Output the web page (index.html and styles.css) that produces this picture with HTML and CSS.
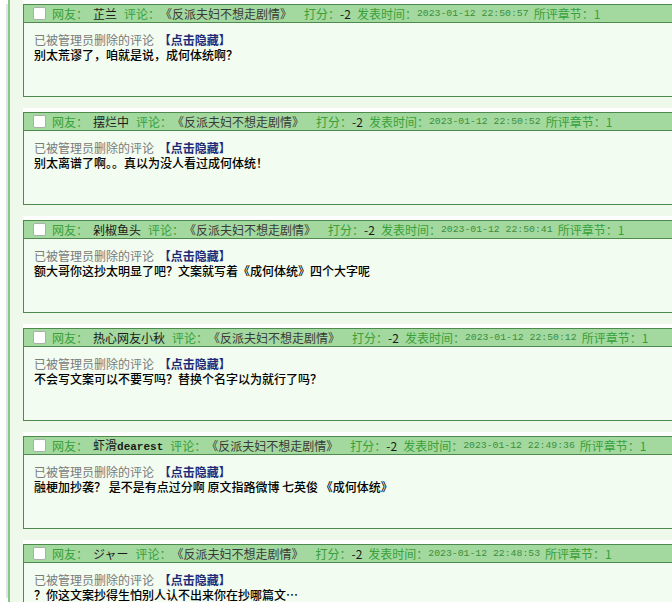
FILE: index.html
```html
<!DOCTYPE html>
<html lang="zh-CN">
<head>
<meta charset="utf-8">
<title>评论</title>
<link rel="stylesheet" href="styles.css">
</head>
<body>
<div class="frame">
  <div class="list">
    <div class="card">
      <div class="head"><span class="cb"></span><span class="g">网友：</span><span class="name">芷兰</span><span class="g">评论：</span><span class="book">《反派夫妇不想走剧情》</span><span class="g gap">打分：</span><span class="score">-2</span><span class="g">发表时间：</span><span class="date">2023-01-12 22:50:57</span><span class="g">所评章节：1</span></div>
      <div class="body"><div><span class="del">已被管理员删除的评论</span> <span class="hide">【点击隐藏】</span></div><div class="txt">别太荒谬了，咱就是说，成何体统啊？</div></div>
    </div>
    <div class="card">
      <div class="head"><span class="cb"></span><span class="g">网友：</span><span class="name">摆烂中</span><span class="g">评论：</span><span class="book">《反派夫妇不想走剧情》</span><span class="g gap">打分：</span><span class="score">-2</span><span class="g">发表时间：</span><span class="date">2023-01-12 22:50:52</span><span class="g">所评章节：1</span></div>
      <div class="body"><div><span class="del">已被管理员删除的评论</span> <span class="hide">【点击隐藏】</span></div><div class="txt">别太离谱了啊。。真以为没人看过成何体统！</div></div>
    </div>
    <div class="card">
      <div class="head"><span class="cb"></span><span class="g">网友：</span><span class="name">剁椒鱼头</span><span class="g">评论：</span><span class="book">《反派夫妇不想走剧情》</span><span class="g gap">打分：</span><span class="score">-2</span><span class="g">发表时间：</span><span class="date">2023-01-12 22:50:41</span><span class="g">所评章节：1</span></div>
      <div class="body"><div><span class="del">已被管理员删除的评论</span> <span class="hide">【点击隐藏】</span></div><div class="txt">额大哥你这抄太明显了吧？文案就写着《成何体统》四个大字呢</div></div>
    </div>
    <div class="card">
      <div class="head"><span class="cb"></span><span class="g">网友：</span><span class="name">热心网友小秋</span><span class="g">评论：</span><span class="book">《反派夫妇不想走剧情》</span><span class="g gap">打分：</span><span class="score">-2</span><span class="g">发表时间：</span><span class="date">2023-01-12 22:50:12</span><span class="g">所评章节：1</span></div>
      <div class="body"><div><span class="del">已被管理员删除的评论</span> <span class="hide">【点击隐藏】</span></div><div class="txt">不会写文案可以不要写吗？替换个名字以为就行了吗？</div></div>
    </div>
    <div class="card">
      <div class="head"><span class="cb"></span><span class="g">网友：</span><span class="name">虾滑<span class="lat">dearest</span></span><span class="g">评论：</span><span class="book">《反派夫妇不想走剧情》</span><span class="g gap">打分：</span><span class="score">-2</span><span class="g">发表时间：</span><span class="date">2023-01-12 22:49:36</span><span class="g">所评章节：1</span></div>
      <div class="body"><div><span class="del">已被管理员删除的评论</span> <span class="hide">【点击隐藏】</span></div><div class="txt">融梗加抄袭？ 是不是有点过分啊 原文指路微博 七英俊 《成何体统》</div></div>
    </div>
    <div class="card">
      <div class="head"><span class="cb"></span><span class="g">网友：</span><span class="name">ジャー</span><span class="g">评论：</span><span class="book">《反派夫妇不想走剧情》</span><span class="g gap">打分：</span><span class="score">-2</span><span class="g">发表时间：</span><span class="date">2023-01-12 22:48:53</span><span class="g">所评章节：1</span></div>
      <div class="body"><div><span class="del">已被管理员删除的评论</span> <span class="hide">【点击隐藏】</span></div><div class="txt">？你这文案抄得生怕别人认不出来你在抄哪篇文…</div></div>
    </div>
  </div>
</div>
</body>
</html>
```

FILE: styles.css
```css
html, body {
  margin: 0;
  padding: 0;
  background: #ffffff;
  overflow: hidden;
  height: 602px;
}
body {
  font-family: "Noto Sans CJK SC", "Noto Sans", sans-serif;
  font-size: 12px;
}
.frame {
  margin-left: 8px;
  border-left: 2px solid #8cc68a;
  background: #eef9ec;
  height: 602px;
  box-shadow: -6px 0 0 -4px #dde6e4;
}
.list {
  padding: 4px 0 0 13px;
  display: flex;
  flex-direction: column;
  gap: 15px;
}
.card {
  width: 700px;
  border: 1px solid #4e8a4e;
  border-right: none;
  background: #f2fcf0;
  box-shadow: 0 -4px 0 #ffffff;
}
.head {
  height: 17px;
  line-height: 17px;
  background: #a3d99f;
  border-bottom: 1px solid #4e8a4e;
  display: flex;
  align-items: center;
  white-space: nowrap;
  padding-left: 9px;
}
.cb {
  width: 11px;
  height: 11px;
  border: 1px solid #a8b0a8;
  border-radius: 2px;
  background: #ffffff;
  margin-right: 6px;
  flex: none;
}
.g {
  color: #38a038;
}
.gap {
  margin-left: 12px;
}
.name {
  color: #1a1a1a;
  margin: 0 7px 0 5px;
}
.lat {
  font-family: "Liberation Mono", monospace;
  font-size: 11px;
  font-weight: bold;
}
.book {
  color: #3a3a3a;
}
.score {
  color: #1a1a1a;
  margin: 0 6px 0 0;
}
.date {
  font-family: "Liberation Mono", monospace;
  font-size: 9.8px;
  color: #3c8f3c;
  margin-right: 5px;
}
.body {
  height: 64px;
  padding: 9px 0 0 10px;
  line-height: 15px;
}
.del {
  color: #7a7a7a;
}
.hide {
  color: #1e2a78;
  font-weight: bold;
  margin-left: 2px;
}
.txt {
  color: #000000;
  font-weight: 500;
}
```
